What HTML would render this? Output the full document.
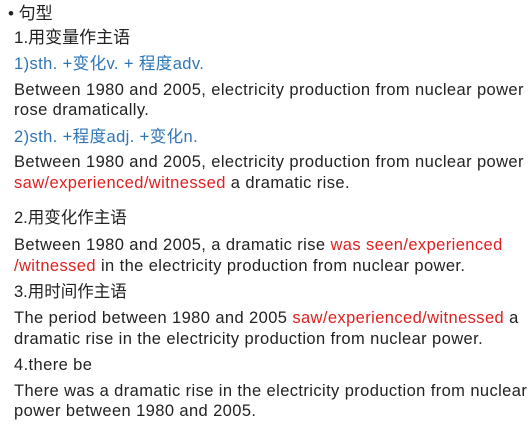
<!DOCTYPE html>
<html><head><meta charset="utf-8"><style>
body{margin:0;width:530px;height:424px;background:#fff;position:relative;overflow:hidden;font-family:"Liberation Sans","Noto Sans CJK SC",sans-serif;color:#222;}
div{position:absolute;left:14px;white-space:nowrap;font-size:16.5px;letter-spacing:0.4px;line-height:20px;}
.b{color:#2e75b6}.r{color:#e02020}
</style></head><body>
<div style="top:4px;left:8px;font-size:17px;letter-spacing:0">• 句型</div>
<div style="top:28px;font-size:17px;letter-spacing:0">1.用变量作主语</div>
<div class="b" style="top:54px">1)sth. +变化v. + 程度adv.</div>
<div style="top:80px">Between 1980 and 2005, electricity production from nuclear power</div>
<div style="top:100px">rose dramatically.</div>
<div class="b" style="top:127px">2)sth. +程度adj. +变化n.</div>
<div style="top:152px">Between 1980 and 2005, electricity production from nuclear power</div>
<div style="top:173px"><span class="r">saw/experienced/witnessed</span> a dramatic rise.</div>
<div style="top:208px;letter-spacing:0">2.用变化作主语</div>
<div style="top:235px">Between 1980 and 2005, a dramatic rise <span class="r">was seen/experienced</span></div>
<div style="top:256px"><span class="r">/witnessed</span> in the electricity production from nuclear power.</div>
<div style="top:282px;letter-spacing:0">3.用时间作主语</div>
<div style="top:308px">The period between 1980 and 2005 <span class="r">saw/experienced/witnessed</span> a</div>
<div style="top:329px">dramatic rise in the electricity production from nuclear power.</div>
<div style="top:355px">4.there be</div>
<div style="top:381px">There was a dramatic rise in the electricity production from nuclear</div>
<div style="top:401px">power between 1980 and 2005.</div>
</body></html>
